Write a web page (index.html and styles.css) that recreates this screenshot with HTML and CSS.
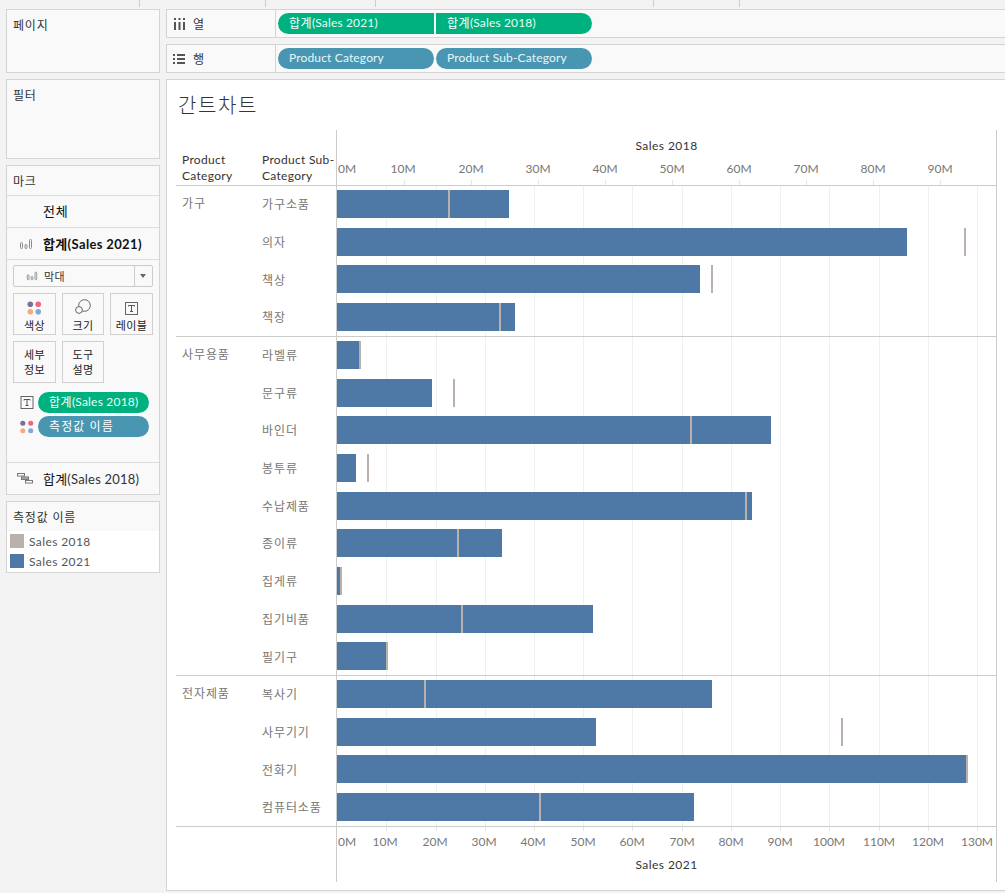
FILE: index.html
```html
<!DOCTYPE html>
<html lang="ko">
<head>
<meta charset="utf-8">
<title>간트차트</title>
<link rel="stylesheet" href="styles.css">
</head>
<body>
<div class="ruler"><i class="r1"></i><i class="r2"></i><i class="r3"></i><i class="r4"></i><i class="r5"></i></div>
<div class="app">
  <aside class="side">
    <section class="panel pages"><h2>페이지</h2></section>
    <section class="panel filters"><h2>필터</h2></section>
    <section class="panel marks">
      <h2 class="marks-title">마크</h2>
      <div class="mark-row all"><span>전체</span></div>
      <div class="mark-row sel">
        <svg class="ic" width="14" height="12" viewBox="0 0 14 12"><g fill="none" stroke="#8a8a8a"><rect x="1.5" y="4.5" width="2" height="6" rx="1"/><rect x="6" y="6.5" width="2" height="4" rx="1"/><rect x="10.5" y="1.5" width="2" height="9" rx="1"/></g></svg>
        <strong>합계(Sales 2021)</strong>
      </div>
      <div class="marks-body">
        <div class="select">
          <svg width="12" height="12" viewBox="0 0 14 12"><g fill="none" stroke="#8a8a8a"><rect x="1.5" y="4.5" width="2" height="6" rx="1"/><rect x="6" y="6.5" width="2" height="4" rx="1"/><rect x="10.5" y="1.5" width="2" height="9" rx="1"/></g></svg>
          <span class="select-label">막대</span>
          <span class="caret"></span>
        </div>
        <div class="cards">
          <div class="card"><svg width="15" height="14" viewBox="0 0 16 15"><circle cx="3.5" cy="3.5" r="3" fill="#7f6c97"/><circle cx="12" cy="3.5" r="3" fill="#f0667f"/><circle cx="3.5" cy="11.5" r="3" fill="#f5a97f"/><circle cx="12" cy="11.5" r="3" fill="#82a8d2"/></svg><span>색상</span></div>
          <div class="card"><svg width="16" height="16" viewBox="0 0 16 16"><circle cx="9.5" cy="6.5" r="5.8" fill="none" stroke="#666"/><circle cx="4" cy="11" r="3.4" fill="#f9f9f9" stroke="#666"/></svg><span>크기</span></div>
          <div class="card"><svg width="13" height="13" viewBox="0 0 13 13"><rect x=".5" y=".5" width="12" height="12" fill="none" stroke="#666"/><path d="M3.5 4.5v-1h6v1M6.5 3.5v6M5 9.5h3" fill="none" stroke="#555"/></svg><span>레이블</span></div>
          <div class="card text"><span>세부<br>정보</span></div>
          <div class="card text"><span>도구<br>설명</span></div>
        </div>
        <div class="enc">
          <svg width="14" height="13" viewBox="0 0 13 13"><rect x=".5" y=".5" width="12" height="12" fill="none" stroke="#666"/><path d="M3.5 4.5v-1h6v1M6.5 3.5v6M5 9.5h3" fill="none" stroke="#555"/></svg>
          <span class="pill green"><span class="pill-ko">합계</span>(Sales 2018)</span>
        </div>
        <div class="enc">
          <svg width="14" height="14" viewBox="0 0 15 14"><circle cx="3" cy="3" r="2.7" fill="#7f6c97"/><circle cx="11.5" cy="3" r="2.7" fill="#f0667f"/><circle cx="3" cy="11" r="2.7" fill="#f5a97f"/><circle cx="11.5" cy="11" r="2.7" fill="#82a8d2"/></svg>
          <span class="pill teal"><span class="pill-ko">측정값 이름</span></span>
        </div>
      </div>
      <div class="mark-row last">
        <svg class="ic" width="16" height="11" viewBox="0 0 16 11"><g stroke="#777"><rect x=".5" y=".5" width="7" height="2.5" fill="#fff"/><rect x="4.5" y="4" width="7" height="2.5" fill="#aaa"/><rect x="8.5" y="7.5" width="7" height="2.5" fill="#fff"/></g></svg>
        <span>합계<span class="lat">(Sales 2018)</span></span>
      </div>
    </section>
    <section class="panel legend">
      <h2>측정값 이름</h2>
      <ul>
        <li><i class="sw s18"></i>Sales 2018</li>
        <li><i class="sw s21"></i>Sales 2021</li>
      </ul>
    </section>
  </aside>
  <main class="main">
    <div class="shelf">
      <div class="shelf-name"><svg width="12" height="12" viewBox="0 0 12 12"><path d="M2 4v8M6.5 4v8M11 4v8M2 0v2M6.5 0v2M11 0v2" stroke="#555" stroke-width="2"/></svg><span>열</span></div>
      <div class="shelf-pills"><span class="pill green wide join-r"><span class="pill-ko">합계</span>(Sales 2021)</span><span class="pill green wide join-l"><span class="pill-ko">합계</span>(Sales 2018)</span></div>
    </div>
    <div class="shelf">
      <div class="shelf-name"><svg width="12" height="10" viewBox="0 0 12 10"><path d="M0 1h2M0 5h2M0 9h2M4 1h8M4 5h8M4 9h8" stroke="#555" stroke-width="2"/></svg><span>행</span></div>
      <div class="shelf-pills"><span class="pill teal wide">Product Category</span><span class="pill teal wide">Product Sub-Category</span></div>
    </div>
    <section class="view">
      <h1>간트차트</h1>
      <div class="chart">
        <div class="head">
          <div class="head-fields"><b>Product<br>Category</b><b>Product Sub-<br>Category</b></div>
          <div class="axis axis-top">
            <div class="axis-title">Sales 2018</div>
            <div class="tick-labels top">
              <span style="left:10px">0M</span><span style="left:66px">10M</span><span style="left:134px">20M</span><span style="left:201px">30M</span><span style="left:268px">40M</span><span style="left:335px">50M</span><span style="left:402px">60M</span><span style="left:469px">70M</span><span style="left:536px">80M</span><span style="left:603px">90M</span>
            </div>
            <div class="ticks"><i style="left:67px"></i><i style="left:134px"></i><i style="left:201px"></i><i style="left:268px"></i><i style="left:335px"></i><i style="left:402px"></i><i style="left:469px"></i><i style="left:536px"></i><i style="left:603px"></i></div>
          </div>
        </div>
        <div class="body">
          <div class="grid-lines">
            <i style="left:49px"></i><i style="left:99px"></i><i style="left:148px"></i><i style="left:197px"></i><i style="left:246px"></i><i style="left:295px"></i><i style="left:345px"></i><i style="left:394px"></i><i style="left:443px"></i><i style="left:492px"></i><i style="left:542px"></i><i style="left:591px"></i><i style="left:640px"></i>
          </div>
          <div class="group g4">
            <div class="cat">가구</div>
            <div class="rows">
              <div class="row"><span class="sub">가구소품</span><div class="plot"><div class="bar" style="width:172px"></div><i class="mk" style="left:111px"></i></div></div>
              <div class="row"><span class="sub">의자</span><div class="plot"><div class="bar" style="width:570px"></div><i class="mk" style="left:627px"></i></div></div>
              <div class="row"><span class="sub">책상</span><div class="plot"><div class="bar" style="width:363px"></div><i class="mk" style="left:374px"></i></div></div>
              <div class="row"><span class="sub">책장</span><div class="plot"><div class="bar" style="width:178px"></div><i class="mk" style="left:162px"></i></div></div>
            </div>
          </div>
          <div class="group g9">
            <div class="cat">사무용품</div>
            <div class="rows">
              <div class="row"><span class="sub">라벨류</span><div class="plot"><div class="bar" style="width:22px"></div><i class="mk" style="left:22px"></i></div></div>
              <div class="row"><span class="sub">문구류</span><div class="plot"><div class="bar" style="width:95px"></div><i class="mk" style="left:116px"></i></div></div>
              <div class="row"><span class="sub">바인더</span><div class="plot"><div class="bar" style="width:434px"></div><i class="mk" style="left:353px"></i></div></div>
              <div class="row"><span class="sub">봉투류</span><div class="plot"><div class="bar" style="width:19px"></div><i class="mk" style="left:30px"></i></div></div>
              <div class="row"><span class="sub">수납제품</span><div class="plot"><div class="bar" style="width:415px"></div><i class="mk" style="left:408px"></i></div></div>
              <div class="row"><span class="sub">종이류</span><div class="plot"><div class="bar" style="width:165px"></div><i class="mk" style="left:120px"></i></div></div>
              <div class="row"><span class="sub">집게류</span><div class="plot"><div class="bar" style="width:5px"></div><i class="mk" style="left:3px"></i></div></div>
              <div class="row"><span class="sub">집기비품</span><div class="plot"><div class="bar" style="width:256px"></div><i class="mk" style="left:124px"></i></div></div>
              <div class="row"><span class="sub">필기구</span><div class="plot"><div class="bar" style="width:49px"></div><i class="mk" style="left:49px"></i></div></div>
            </div>
          </div>
          <div class="group g4">
            <div class="cat">전자제품</div>
            <div class="rows">
              <div class="row"><span class="sub">복사기</span><div class="plot"><div class="bar" style="width:375px"></div><i class="mk" style="left:87px"></i></div></div>
              <div class="row"><span class="sub">사무기기</span><div class="plot"><div class="bar" style="width:259px"></div><i class="mk" style="left:504px"></i></div></div>
              <div class="row"><span class="sub">전화기</span><div class="plot"><div class="bar" style="width:629px"></div><i class="mk" style="left:629px"></i></div></div>
              <div class="row"><span class="sub">컴퓨터소품</span><div class="plot"><div class="bar" style="width:357px"></div><i class="mk" style="left:202px"></i></div></div>
            </div>
          </div>
        </div>
        <div class="foot">
          <div class="axis axis-bottom">
            <div class="ticks down"><i style="left:49px"></i><i style="left:99px"></i><i style="left:148px"></i><i style="left:197px"></i><i style="left:246px"></i><i style="left:295px"></i><i style="left:345px"></i><i style="left:394px"></i><i style="left:443px"></i><i style="left:492px"></i><i style="left:542px"></i><i style="left:591px"></i><i style="left:640px"></i></div>
            <div class="tick-labels bottom">
              <span style="left:10px">0M</span><span style="left:48px">10M</span><span style="left:98px">20M</span><span style="left:147px">30M</span><span style="left:196px">40M</span><span style="left:246px">50M</span><span style="left:295px">60M</span><span style="left:345px">70M</span><span style="left:394px">80M</span><span style="left:443px">90M</span><span style="left:492px">100M</span><span style="left:542px">110M</span><span style="left:591px">120M</span><span style="left:640px">130M</span>
            </div>
            <div class="axis-title">Sales 2021</div>
          </div>
        </div>
      </div>
    </section>
  </main>
</div>
</body>
</html>
```
FILE: styles.css
```css
* { box-sizing: border-box; }
html, body { margin: 0; padding: 0; }
body {
  width: 1005px; height: 893px; overflow: hidden; background: #f3f3f3; color: #333;
  font: 12px Lato, "Noto Sans CJK KR", sans-serif;
}
h1, h2, ul { margin: 0; padding: 0; font-weight: 400; }
ul { list-style: none; }
.ruler { height: 9px; position: relative; }
.ruler i { position: absolute; top: 0; width: 1px; height: 7px; background: #ccc; }
.r1 { left: 139px; } .r2 { left: 265px; } .r3 { left: 375px; } .r4 { left: 653px; } .r5 { left: 739px; }
.app { display: flex; gap: 6px; padding-left: 6px; }
.side { width: 154px; display: flex; flex-direction: column; gap: 6px; }
.panel { background: #f9f9f9; border: 1px solid #d4d4d4; }
.panel h2 { font-size: 12px; color: #333; padding: 7px 6px 0; line-height: 17px; letter-spacing: .8px; }
.pages { height: 64px; }
.filters { height: 80px; }
.marks { height: 330px; display: flex; flex-direction: column; }
.marks h2.marks-title { height: 30px; padding-top: 7px; border-bottom: 1px solid #dcdcdc; }
.mark-row { display: flex; align-items: center; border-bottom: 1px solid #dcdcdc; padding-left: 12px; color: #111; font-size: 13px; height: 32px; }
.mark-row.all { padding-left: 36px; padding-bottom: 2px; letter-spacing: .8px; }
.mark-row .ic { margin-right: 10px; flex: none; }
.mark-row strong { font-weight: 700; letter-spacing: .35px; }
.marks-body { flex: 1; padding: 5px 6px 0; }
.select { display: flex; align-items: center; height: 22px; border: 1px solid #ccc; border-radius: 2px; padding-left: 12px; font-size: 11px; }
.select-label { margin-left: 6px; flex: 1; letter-spacing: .3px; }
.caret { width: 18px; height: 20px; border-left: 1px solid #ccc; position: relative; }
.caret::after { content: ""; position: absolute; left: 5px; top: 8px; border: 3.5px solid transparent; border-top: 4px solid #666; border-bottom: 0; }
.cards { display: grid; grid-template-columns: 43px 42px 43px; gap: 6px; margin-top: 6px; }
.card { height: 42px; border: 1px solid #d0d0d0; display: flex; flex-direction: column; align-items: center; justify-content: flex-end; padding-bottom: 1px; font-size: 11px; color: #222; line-height: 15px; letter-spacing: .3px; }
.card svg { margin-bottom: 3px; }
.card.text { justify-content: center; text-align: center; padding: 0; }
.enc { display: flex; align-items: center; height: 21px; margin-top: 3px; }
.enc svg { margin-left: 7px; flex: none; margin-right: 4px; }
.cards + .enc { margin-top: 9px; }
.pill { display: flex; align-items: center; height: 21px; border-radius: 11px; padding: 0 0 2px 11px; font-size: 12px; width: 111px; white-space: nowrap; letter-spacing: .2px; }
.pill-ko { color: #fff; letter-spacing: .4px; }
.green { background: #00b180; color: #e6fff4; }
.teal { background: #4996b2; color: #e6f6fb; }
.teal .pill-ko { letter-spacing: 1.1px; }
.last { margin-top: auto; border-top: 1px solid #dcdcdc; border-bottom: 0; height: 32px; padding-left: 10px; letter-spacing: .2px; }
.lat { color: #333; }
.legend { height: 72px; }
.legend h2 { height: 29px; }
.legend ul { background: #fff; padding: 0 0 0 3px; height: 41px; }
.legend li { display: flex; align-items: center; height: 20px; color: #555; letter-spacing: .4px; }
.sw { width: 14px; height: 14px; margin-right: 5px; }
.s18 { background: #bab0ac; }
.s21 { background: #4e79a7; }
.main { width: 839px; display: flex; flex-direction: column; gap: 6px; }
.shelf { height: 29px; display: flex; background: #f9f9f9; border: 1px solid #d4d4d4; border-right: 0; }
.shelf-name { width: 109px; border-right: 1px solid #d4d4d4; display: flex; align-items: center; gap: 8px; padding-left: 6px; }
.shelf-pills { display: flex; gap: 2px; padding: 3px 0 0 2px; }
.pill.wide { width: 156px; letter-spacing: .15px; }
.pill.join-r { border-radius: 11px 0 0 11px; }
.pill.join-l { border-radius: 0 11px 11px 0; }
.view { height: 812px; background: #fff; border: 1px solid #d4d4d4; border-right: 0; padding-left: 9px; }
.view h1 { font-size: 20px; font-weight: 300; color: #333; height: 50px; padding: 10px 0 0 2px; line-height: 30px; letter-spacing: 1.6px; }
.chart { width: 821px; height: 751px; display: flex; flex-direction: column; }
.head { flex: none; height: 55.3px; display: flex; }
.head-fields { width: 160px; flex: none; display: flex; align-items: flex-end; padding-bottom: 1px; }
.head-fields b { width: 80px; padding-left: 6px; font-weight: 400; line-height: 16px; color: #333; letter-spacing: .3px; }
.axis { position: relative; border-left: 1px solid #ccc; border-right: 1px solid #ccc; width: 661px; }
.axis-title { letter-spacing: .45px; }
.axis-top .axis-title { text-align: center; padding-top: 8px; line-height: 16px; }
.tick-labels { position: absolute; left: 0; right: 0; height: 16px; color: #777; }
.tick-labels span { position: absolute; transform: translateX(-50%); line-height: 16px; }
.tick-labels.top { top: 31px; }
.tick-labels.bottom { top: 7px; }
.ticks { position: absolute; left: 0; right: 0; top: 50px; height: 5px; }
.ticks i { position: absolute; top: 0; width: 1px; height: 5px; background: #e6e6e6; }
.ticks.down { top: 0; height: 4px; }
.ticks.down i { height: 4px; }
.body { flex: none; position: relative; height: 640.73px; }
.grid-lines { position: absolute; left: 161px; top: 0; bottom: 0; width: 660px; }
.grid-lines i { position: absolute; top: 0; bottom: 0; width: 1px; background: #f0f0f0; }
.group { position: relative; display: flex; border-top: 1px solid #ccc; }
.group.g4 { height: 150.76px; }
.group.g9 { height: 339.21px; }
.cat { width: 80px; padding-left: 6px; color: #777; font-size: 12px; line-height: 16px; padding-top: 10px; flex: none; letter-spacing: .9px; }
.rows { flex: 1; margin-top: -1px; }
.row { height: 37.69px; display: flex; position: relative; }
.sub { width: 80px; flex: none; padding-left: 6px; color: #777; font-size: 12px; line-height: 16px; padding-top: 12px; letter-spacing: .9px; white-space: nowrap; }
.plot { position: relative; height: 100%; border-left: 1px solid #ccc; width: 661px; flex: none; border-right: 1px solid #ccc; }
.bar { height: 28px; margin-top: 4.8px; background: #4e79a7; }
.mk { position: absolute; top: 4.8px; width: 2px; height: 28px; background: #bab0ac; }
.foot { flex: none; height: 55px; display: flex; border-top: 1px solid #ccc; padding-left: 160px; }
.axis-bottom { height: 55px; }
.axis-bottom .axis-title { position: absolute; top: 30px; left: 0; right: 0; text-align: center; line-height: 16px; }
```
